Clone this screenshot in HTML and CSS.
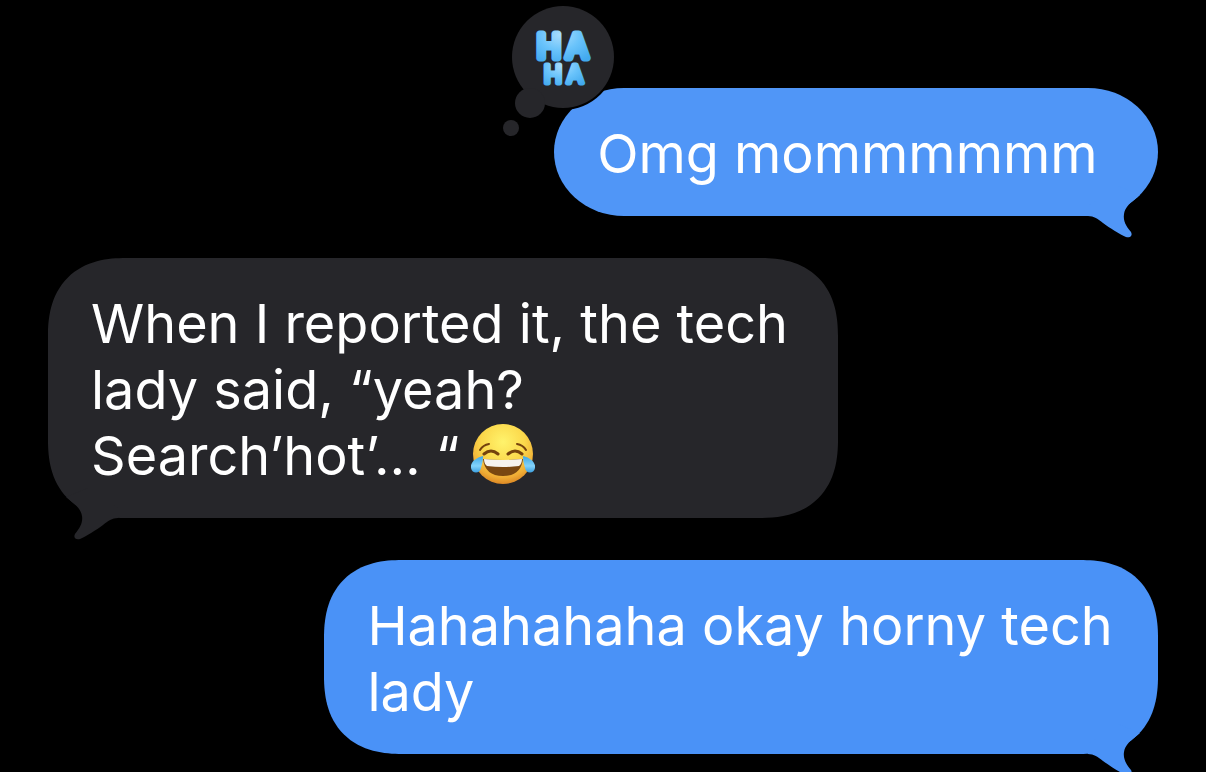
FILE: index.html
```html
<!DOCTYPE html>
<html lang="en">
<head>
<meta charset="utf-8">
<meta name="viewport" content="width=device-width, initial-scale=1">
<title>Messages</title>
<link rel="stylesheet" href="styles.css">
</head>
<body>
<main class="thread">
  <article class="bubble sent single">
    <p class="text">Omg mommmmmm</p>
    <svg class="tail" viewBox="0 0 80 64" aria-hidden="true"><path d="M10 40C16 40 20 43 25 47C32 52 41 58 48 61C52 62 55 60 53 56C48 50 45 45 46 38C47 32 51 28 56 24L62 19L40 10L10 30Z"/></svg>
    <svg class="reaction" viewBox="0 0 116 140" role="img" aria-label="Haha reaction">
      <defs>
        <radialGradient id="balloon" cx=".45" cy=".2" r=".8"><stop offset="0" stop-color="#a9dcfc"/><stop offset=".5" stop-color="#69c3fb"/><stop offset="1" stop-color="#42a9ee"/></radialGradient>
      </defs>
      <circle class="halo" cx="61" cy="57" r="53"/>
      <g class="cloud"><circle cx="61" cy="57" r="51"/><circle cx="28" cy="103" r="15"/><circle cx="9" cy="128" r="8"/></g>
      <g class="haha">
        <text class="big" x="47 75" y="58">HA</text>
        <text class="small" x="51 73" y="83">HA</text>
      </g>
    </svg>
  </article>
  <article class="bubble received">
    <p class="text">When I reported it, the tech lady said, “yeah? Search’hot’… “ <svg class="emoji" viewBox="0 0 64 62" role="img" aria-label="Face with tears of joy">
      <defs>
        <radialGradient id="face" cx=".5" cy=".3" r=".72"><stop offset="0" stop-color="#fff36c"/><stop offset=".5" stop-color="#fbd84b"/><stop offset=".82" stop-color="#f0ad35"/><stop offset="1" stop-color="#d98222"/></radialGradient>
        <linearGradient id="tear" x1="0" y1="0" x2="0" y2="1"><stop offset="0" stop-color="#3da7e6"/><stop offset=".6" stop-color="#83d2fa"/><stop offset="1" stop-color="#3b9fe0"/></linearGradient>
      </defs>
      <circle cx="32" cy="31" r="30" fill="url(#face)"/>
      <g fill="none" stroke="#75420d" stroke-linecap="round">
        <path d="M9 27Q12 22 18 21M46 21Q52 22 55 27" stroke-width="2"/>
        <path d="M13 31Q20 25 27 31M37 31Q44 25 51 31" stroke-width="3"/>
      </g>
      <path d="M12 36Q32 38 52 36Q50 53 32 53Q14 53 12 36Z" fill="#794711"/>
      <path d="M13 36Q32 38 51 36Q51 41 48 43Q32 45 16 43Q13 41 13 36Z" fill="#f6f3ee"/>
      <path d="M12 33C4 35-1 40 0 45C1 51 9 51 10 45C11 41 12 38 12 33Z" fill="url(#tear)"/>
      <path d="M52 33C60 35 65 40 64 45C63 51 55 51 54 45C53 41 52 38 52 33Z" fill="url(#tear)"/>
    </svg></p>
    <svg class="tail" viewBox="0 0 80 64" aria-hidden="true"><path d="M10 40C16 40 20 43 25 47C32 52 41 58 48 61C52 62 55 60 53 56C48 50 45 45 46 38C47 32 51 28 56 24L62 19L40 10L10 30Z"/></svg>
  </article>
  <article class="bubble sent latest">
    <p class="text">Hahahahaha okay horny tech lady</p>
    <svg class="tail" viewBox="0 0 80 64" aria-hidden="true"><path d="M10 40C16 40 20 43 25 47C32 52 41 58 48 61C52 62 55 60 53 56C48 50 45 45 46 38C47 32 51 28 56 24L62 19L40 10L10 30Z"/></svg>
  </article>
</main>
</body>
</html>
```
FILE: styles.css
```css
body {
  margin: 0;
  background: #000;
  color: #fff;
  font-family: Inter, "Liberation Sans", sans-serif;
}

.thread {
  display: flex;
  flex-direction: column;
  gap: 42px;
  padding: 88px 48px 18px;
  overflow: hidden;
}

.bubble {
  --fill: #26262a;
  position: relative;
  box-sizing: border-box;
  padding: 33px 43px 29px;
  border-radius: 62px;
  background: var(--fill);
}

.text {
  margin: 0;
  font-size: 54px;
  line-height: 66px;
}

.sent {
  --fill: #5096f7;
  align-self: flex-end;
}

.latest {
  --fill: #4a92f7;
  max-width: 75.1%;
}

.received {
  align-self: flex-start;
  max-width: 71.2%;
}

@supports (corner-shape: squircle) {
  .bubble {
    border-radius: 78px;
    corner-shape: superellipse(1.25);
  }
}

.single {
  min-width: 54.4%;
  border-radius: 70px / 64px;
  corner-shape: round;
}

.tail {
  position: absolute;
  right: 0;
  bottom: -24px;
  width: 80px;
  height: 64px;
  fill: var(--fill);
}

.received .tail {
  right: auto;
  left: 0;
  transform: scaleX(-1);
}

.reaction {
  position: absolute;
  left: -52px;
  top: -88px;
  width: 116px;
  height: 140px;
}

.halo {
  fill: #000;
}

.cloud {
  fill: #26262a;
}

.haha {
  fill: url(#balloon);
  stroke: url(#balloon);
  stroke-linejoin: round;
  text-anchor: middle;
  font-weight: 400;
}

.big {
  font-size: 32px;
  stroke-width: 7px;
}

.small {
  font-size: 24px;
  stroke-width: 5px;
}

.emoji {
  width: 64px;
  height: 62px;
  vertical-align: -2px;
  margin: -8px -4px;
}
```
